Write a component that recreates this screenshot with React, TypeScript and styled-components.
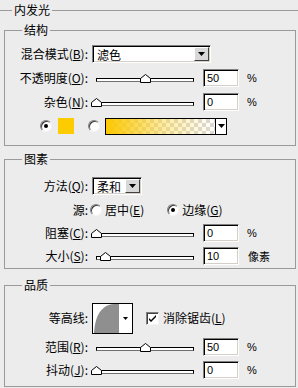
import React from "react";
import styled, { createGlobalStyle } from "styled-components";

const GlobalStyle = createGlobalStyle`
  html, body {
    margin: 0;
    padding: 0;
    background: #ececec;
  }
  body {
    width: 298px;
    height: 388px;
    overflow: hidden;
    font-family: "Noto Sans CJK SC", "Noto Sans", sans-serif;
    font-size: 12px;
    color: #000;
  }
`;

const Outer = styled.fieldset`
  margin: 3px 0 0 0;
  padding: 0;
  min-width: 0;
  border: none;
  border-top: 1px solid #9a9a9a;
`;

const Caption = styled.legend<{ $left: number }>`
  margin-left: ${(p) => p.$left}px;
  padding: 0 2px;
  height: 14px;
  line-height: 14px;
`;

const Group = styled.fieldset<{ $top: number; $pt: number; $pb: number }>`
  margin: ${(p) => p.$top}px 2px 0 4px;
  padding: ${(p) => p.$pt}px 0 ${(p) => p.$pb}px 0;
  min-width: 0;
  border: 1px solid #9a9a9a;
`;

const Row = styled.div<{ $h: number }>`
  display: flex;
  align-items: center;
  height: ${(p) => p.$h}px;
`;

const Label = styled.span`
  flex: none;
  width: 83px;
  margin-right: 4px;
  text-align: right;
  white-space: nowrap;
  line-height: 14px;
`;

const SliderBox = styled.div`
  position: relative;
  flex: none;
  width: 98px;
  height: 10px;
  margin-left: 4px;
`;

const Track = styled.div`
  margin-top: 5px;
  height: 2px;
  background: #fff;
  border: 1px solid #000;
  border-bottom-color: #707070;
`;

const Thumb = styled.svg`
  position: absolute;
  top: 1px;
`;

const NumBox = styled.div`
  flex: none;
  box-sizing: border-box;
  width: 36px;
  height: 18px;
  margin-left: 9px;
  padding-left: 3px;
  background: #fff;
  border: 1px solid;
  border-color: #808080 #fff #fff #808080;
  box-shadow: inset 1px 1px 0 #000, inset -1px -1px 0 #d4d0c8;
  font: 11px/16px "Liberation Sans", Arial, sans-serif;
`;

const Unit = styled.span`
  margin-left: 8px;
  font-family: "Liberation Sans", "Noto Sans CJK SC", sans-serif;
  font-size: 11px;
`;

const UnitCjk = styled.span`
  margin-left: 1px;
`;

const Select = styled.div<{ $w: number }>`
  flex: none;
  display: flex;
  align-items: center;
  box-sizing: border-box;
  width: ${(p) => p.$w}px;
  height: 18px;
  padding: 0 1px 0 4px;
  background: #fff;
  border: 1px solid;
  border-color: #808080 #fff #fff #808080;
  box-shadow: inset 1px 1px 0 #000, inset -1px -1px 0 #d4d0c8;
`;

const DropBtn = styled.span`
  margin-left: auto;
  display: flex;
  align-items: center;
  justify-content: center;
  box-sizing: border-box;
  width: 15px;
  height: 14px;
  background: #d8d8d8;
  border: 1px solid;
  border-color: #fff #404040 #404040 #fff;
`;

const ColorRow = styled.div`
  display: flex;
  align-items: center;
  height: 24px;
  padding-left: 35px;
`;

const Radio = styled.span<{ $on?: boolean; $gap: number }>`
  position: relative;
  flex: none;
  box-sizing: border-box;
  width: 12px;
  height: 12px;
  margin-left: ${(p) => p.$gap}px;
  border-radius: 50%;
  background: #fff;
  border: 1px solid;
  border-color: #808080 #f4f4f4 #f4f4f4 #808080;
  box-shadow: inset 1px 1px 0 #404040;

  &::after {
    content: "";
    display: ${(p) => (p.$on ? "block" : "none")};
    position: absolute;
    left: 3px;
    top: 3px;
    width: 4px;
    height: 4px;
    border-radius: 50%;
    background: #000;
  }
`;

const Swatch = styled.span`
  flex: none;
  width: 16px;
  height: 16px;
  margin-left: 6px;
  background: #fccb00;
`;

const GradientPick = styled.div`
  flex: none;
  display: flex;
  box-sizing: border-box;
  width: 122px;
  height: 17px;
  margin-left: 5px;
  border: 1px solid #000;
  background: #fff;
`;

const Ramp = styled.div`
  flex: 1;
  background: linear-gradient(to right, #fcc800 0%, rgba(253, 214, 60, 0.45) 55%, rgba(255, 255, 255, 0) 100%),
    repeating-conic-gradient(#d9d9d9 0 25%, #fff 0 50%) 0 0 / 8px 8px;
`;

const RampBtn = styled.span`
  display: flex;
  align-items: center;
  justify-content: center;
  width: 10px;
  border-left: 1px solid #000;
`;

const RadioText = styled.span`
  margin-left: 3px;
  line-height: 14px;
`;

const Contour = styled.div`
  flex: none;
  box-sizing: border-box;
  width: 41px;
  height: 31px;
  border: 1px solid #000;
  background: #fff;
`;

const Check = styled.span`
  flex: none;
  display: flex;
  align-items: center;
  justify-content: center;
  box-sizing: border-box;
  width: 13px;
  height: 13px;
  margin-left: 13px;
  background: #fff;
  border: 1px solid;
  border-color: #808080 #f4f4f4 #f4f4f4 #808080;
  box-shadow: inset 1px 1px 0 #404040;
`;

const CheckText = styled.span`
  margin-left: 4px;
  line-height: 14px;
`;

const Arrow = () => (
  <svg width="7" height="4" viewBox="0 0 7 4">
    <path d="M0 0h7L3.5 4z" fill="#000" />
  </svg>
);

const Slider = ({ at }: { at: number }) => (
  <SliderBox>
    <Track />
    <Thumb width="11" height="9" viewBox="0 0 11 9" style={{ left: Math.round(at * 0.97) - 5 }}>
      <path d="M0.5 8.5V4.5L5.5 0.5L10.5 4.5V8.5Z" fill="#fff" stroke="#000" />
    </Thumb>
  </SliderBox>
);

const SliderRow = ({
  label,
  at,
  value,
  unit = "%",
  h,
}: {
  label: React.ReactNode;
  at: number;
  value: string;
  unit?: string;
  h: number;
}) => (
  <Row $h={h}>
    <Label>{label}</Label>
    <Slider at={at} />
    <NumBox>{value}</NumBox>
    {unit === "%" ? <Unit>%</Unit> : <Unit><UnitCjk>{unit}</UnitCjk></Unit>}
  </Row>
);

export default function App() {
  return (
    <>
      <GlobalStyle />
      <Outer>
        <Caption $left={12}>内发光</Caption>

        <Group $top={6} $pt={5} $pb={7}>
          <Caption $left={17}>结构</Caption>
          <Row $h={24}>
            <Label>
              混合模式(<u>B</u>):
            </Label>
            <Select $w={119}>
              滤色
              <DropBtn>
                <Arrow />
              </DropBtn>
            </Select>
          </Row>
          <SliderRow h={24} label={<>不透明度(<u>O</u>):</>} at={50} value="50" />
          <SliderRow h={24} label={<>杂色(<u>N</u>):</>} at={0} value="0" />
          <ColorRow>
            <Radio $on $gap={0} />
            <Swatch />
            <Radio $gap={14} />
            <GradientPick>
              <Ramp />
              <RampBtn>
                <Arrow />
              </RampBtn>
            </GradientPick>
          </ColorRow>
        </Group>

        <Group $top={6} $pt={8} $pb={1}>
          <Caption $left={17}>图素</Caption>
          <Row $h={24}>
            <Label>
              方法(<u>Q</u>):
            </Label>
            <Select $w={50}>
              柔和
              <DropBtn>
                <Arrow />
              </DropBtn>
            </Select>
          </Row>
          <Row $h={23}>
            <Label>源:</Label>
            <Radio $gap={-2} />
            <RadioText>
              居中(<u>E</u>)
            </RadioText>
            <Radio $on $gap={23} />
            <RadioText>
              边缘(<u>G</u>)
            </RadioText>
          </Row>
          <SliderRow h={23} label={<>阻塞(<u>C</u>):</>} at={0} value="0" />
          <SliderRow h={23} label={<>大小(<u>S</u>):</>} at={9} value="10" unit="像素" />
        </Group>

        <Group $top={9} $pt={9} $pb={4}>
          <Caption $left={17}>品质</Caption>
          <Row $h={34}>
            <Label>等高线:</Label>
            <Contour>
              <svg width="39" height="29" viewBox="0 0 39 29">
                <path d="M1 29C2 12 8 1 21 0H26V29Z" fill="#8f8f8f" />
                <path d="M30 13h5l-2.5 3z" fill="#000" />
              </svg>
            </Contour>
            <Check>
              <svg width="9" height="9" viewBox="0 0 9 9">
                <path d="M1 4l2 2 5-5v2l-5 5-2-2z" fill="#000" />
              </svg>
            </Check>
            <CheckText>
              消除锯齿(<u>L</u>)
            </CheckText>
          </Row>
          <SliderRow h={23} label={<>范围(<u>R</u>):</>} at={50} value="50" />
          <SliderRow h={24} label={<>抖动(<u>J</u>):</>} at={0} value="0" />
        </Group>
      </Outer>
    </>
  );
}
